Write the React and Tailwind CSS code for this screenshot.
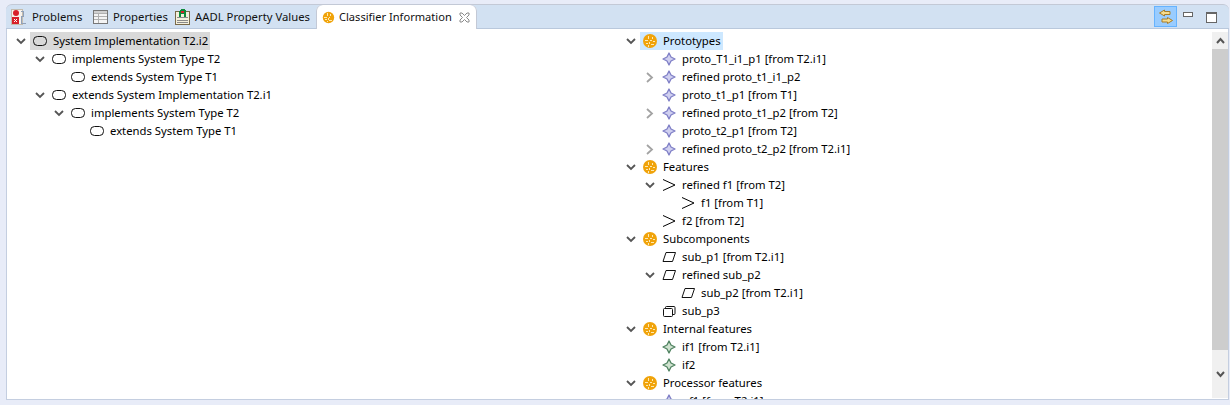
import React from "react";

const font = { fontFamily: "'Noto Sans', sans-serif" };

const depthPad = ["pl-0", "pl-[19px]", "pl-[38px]", "pl-[57px]"];

const SystemIcon = () => (
  <svg width="16" height="16" viewBox="0 0 16 16" fill="none">
    <rect x="1.5" y="3.5" width="13" height="9" rx="4" stroke="#111" />
  </svg>
);

const GoldIcon = ({ size = 16 }) => (
  <svg width={size} height={size} viewBox="0 0 16 16" shapeRendering="crispEdges" className="shrink-0">
    <circle cx="8" cy="8" r="7" fill="#f0a30a" shapeRendering="auto" />
    <path d="M6 3h1v3H6zM10 4h1v2h-1zM3 7h3v1H3zM8 7h2v1H8zM11 8h2v1h-2zM7 9h1v2H7zM4 10h2v1H4zM9 11h3v1H9zM6 12h1v2H6z" fill="#ffe9b0" />
  </svg>
);

const StarIcon = ({ fill, stroke }) => (
  <svg width="16" height="16" viewBox="0 0 16 16">
    <path d="M8 2 L10 6 L14 8 L10 10 L8 14 L6 10 L2 8 L6 6 Z" fill={fill} stroke={stroke} strokeWidth="1.3" strokeLinejoin="round" />
  </svg>
);

const FeatureIcon = () => (
  <svg width="16" height="16" viewBox="0 0 16 16" fill="none">
    <path d="M2 2.5 L14 8 L2 13.5" stroke="#000" strokeWidth="1" />
  </svg>
);

const SubIcon = () => (
  <svg width="16" height="16" viewBox="0 0 16 16" fill="none">
    <path d="M5 3.5 H14.5 L11.5 12.5 H2 Z" stroke="#111" strokeLinejoin="round" />
  </svg>
);

const BoxIcon = () => (
  <svg width="16" height="16" viewBox="0 0 16 16" fill="none">
    <rect x="2.5" y="5.5" width="9" height="8" rx="1" stroke="#111" />
    <path d="M4.5 5.5 V4.5 Q4.5 3.5 5.5 3.5 H13 Q14 3.5 14 4.5 V10.5 Q14 11.5 13 11.5 H11.5" stroke="#111" />
  </svg>
);

const icons = {
  system: <SystemIcon />,
  gold: <GoldIcon />,
  proto: <StarIcon fill="#d0d0f0" stroke="#7f7fc6" />,
  feature: <FeatureIcon />,
  sub: <SubIcon />,
  box: <BoxIcon />,
  green: <StarIcon fill="#cfe2cf" stroke="#4f8260" />,
};

const Chevron = ({ state }) => {
  if (state === "open") {
    return (
      <svg width="10" height="7" viewBox="0 0 10 7" fill="none">
        <path d="M1 1 L5 5 L9 1" stroke="#555" strokeWidth="1.8" />
      </svg>
    );
  }
  if (state === "closed") {
    return (
      <svg width="8" height="11" viewBox="0 0 8 11" fill="none">
        <path d="M1 1 L6 5.5 L1 10" stroke="#a3a3a3" strokeWidth="1.8" />
      </svg>
    );
  }
  return null;
};

const TreeRow = ({ depth, state, icon, label, selected }) => (
  <div className={`flex h-[18px] items-center ${depthPad[depth]}`}>
    <span className="flex h-[18px] w-[19px] shrink-0 items-center justify-center">
      <Chevron state={state} />
    </span>
    <span className={`flex h-[18px] items-center gap-[5px] pl-[2px] pr-[2px] ${selected || ""}`}>
      {icons[icon]}
      <span className="whitespace-nowrap text-[11.3px] leading-[18px] text-black">{label}</span>
    </span>
  </div>
);

const leftRows = [
  { depth: 0, state: "open", icon: "system", label: "System Implementation T2.i2", selected: "bg-[#d9d9d9]" },
  { depth: 1, state: "open", icon: "system", label: "implements System Type T2" },
  { depth: 2, icon: "system", label: "extends System Type T1" },
  { depth: 1, state: "open", icon: "system", label: "extends System Implementation T2.i1" },
  { depth: 2, state: "open", icon: "system", label: "implements System Type T2" },
  { depth: 3, icon: "system", label: "extends System Type T1" },
];

const rightRows = [
  { depth: 0, state: "open", icon: "gold", label: "Prototypes", selected: "bg-[#cde8ff]" },
  { depth: 1, icon: "proto", label: "proto_T1_i1_p1 [from T2.i1]" },
  { depth: 1, state: "closed", icon: "proto", label: "refined proto_t1_i1_p2" },
  { depth: 1, icon: "proto", label: "proto_t1_p1 [from T1]" },
  { depth: 1, state: "closed", icon: "proto", label: "refined proto_t1_p2 [from T2]" },
  { depth: 1, icon: "proto", label: "proto_t2_p1 [from T2]" },
  { depth: 1, state: "closed", icon: "proto", label: "refined proto_t2_p2 [from T2.i1]" },
  { depth: 0, state: "open", icon: "gold", label: "Features" },
  { depth: 1, state: "open", icon: "feature", label: "refined f1 [from T2]" },
  { depth: 2, icon: "feature", label: "f1 [from T1]" },
  { depth: 1, icon: "feature", label: "f2 [from T2]" },
  { depth: 0, state: "open", icon: "gold", label: "Subcomponents" },
  { depth: 1, icon: "sub", label: "sub_p1 [from T2.i1]" },
  { depth: 1, state: "open", icon: "sub", label: "refined sub_p2" },
  { depth: 2, icon: "sub", label: "sub_p2 [from T2.i1]" },
  { depth: 1, icon: "box", label: "sub_p3" },
  { depth: 0, state: "open", icon: "gold", label: "Internal features" },
  { depth: 1, icon: "green", label: "if1 [from T2.i1]" },
  { depth: 1, icon: "green", label: "if2" },
  { depth: 0, state: "open", icon: "gold", label: "Processor features" },
  { depth: 1, icon: "proto", label: "pf1 [from T2.i1]" },
];

const ProblemsIcon = () => (
  <svg width="15" height="16" viewBox="0 0 15 16" shapeRendering="crispEdges" className="shrink-0">
    <rect x="0.5" y="0.5" width="11" height="15" fill="#f6f2ec" stroke="#c4bcae" />
    <circle cx="5" cy="4" r="3" fill="#d8202a" shapeRendering="auto" />
    <rect x="1" y="8" width="7" height="7" fill="#d8202a" />
    <path d="M3 10h1v1H3zM5 10h1v1H5zM4 11h1v1H4zM3 12h1v1H3zM5 12h1v1H5z" fill="#fff" />
    <path d="M9.5 2.5h3v5h-2v7h4" fill="none" stroke="#8fa0b8" />
  </svg>
);

const PropertiesIcon = () => (
  <svg width="15" height="14" viewBox="0 0 15 14" shapeRendering="crispEdges" className="shrink-0">
    <rect x="0.5" y="0.5" width="14" height="13" fill="#f4f4f4" stroke="#777" />
    <path d="M1 3.5h13M1 6.5h13M1 9.5h13M5.5 3v10" stroke="#b0b0b0" fill="none" />
    <rect x="1" y="1" width="13" height="2" fill="#cfcfcf" />
  </svg>
);

const AadlIcon = () => (
  <svg width="15" height="16" viewBox="0 0 15 16" shapeRendering="crispEdges" className="shrink-0">
    <rect x="0.5" y="2.5" width="14" height="13" fill="#f4f0dc" stroke="#7a6a4a" />
    <path d="M2 8.5h11M2 11.5h11M2 13.5h11" stroke="#8a8a8a" fill="none" />
    <path d="M4 8V2l2-2h3l2 2v6H9V5H6v3z" fill="#0f8a3a" />
    <rect x="6" y="2" width="3" height="2" fill="#d8202a" />
  </svg>
);

const Tab = ({ icon, label, className }) => (
  <div className={`flex h-[24px] shrink-0 items-center ${className}`}>
    {icon}
    <span className="whitespace-nowrap pt-px text-[11.3px] text-[#111]">{label}</span>
  </div>
);

const ToggleIcon = () => (
  <svg width="16" height="16" viewBox="0 0 16 16">
    <path d="M6.5 1 L1.5 4 L6.5 7 V5.5 H12 V2.5 H6.5 Z" fill="#f7dc8e" stroke="#a87c26" />
    <path d="M9.5 8.5 L14.5 11.5 L9.5 14.5 V13 H4 V10 H9.5 Z" fill="#f7dc8e" stroke="#a87c26" />
  </svg>
);

const App = () => (
  <div className="flex h-[405px] w-[1230px] flex-col overflow-hidden bg-[#e8ecf8] pl-[6px] pr-px pt-[4px] pb-[5px]" style={font}>
    <div className="flex h-[25px] shrink-0 rounded-t-[6px] border-t border-[#c3c9d6] bg-[#d2e1f2] shadow-[inset_0_-1px_0_#b9c8dc]">
      <Tab className="ml-[5px] w-[82px] gap-[6px]" icon={<ProblemsIcon />} label="Problems" />
      <Tab className="w-[82px] gap-[5px]" icon={<PropertiesIcon />} label="Properties" />
      <Tab className="w-[141px] gap-[5px]" icon={<AadlIcon />} label="AADL Property Values" />
      <div className="flex h-[24px] w-[161px] shrink-0 items-center gap-[4px] rounded-t-[6px] bg-white pl-[6px] shadow-[inset_1px_0_0_#c3c9d6,inset_-1px_0_0_#c3c9d6]">
        <GoldIcon size={13} />
        <span className="whitespace-nowrap pt-px text-[11.1px] text-[#111]">Classifier Information</span>
        <svg width="11" height="11" viewBox="0 0 11 11" fill="none" className="ml-[3px] shrink-0">
          <path d="M1 1h2l2.5 2.5L8 1h2v2L7.5 5.5 10 8v2H8L5.5 7.5 3 10H1V8l2.5-2.5L1 3z" stroke="#8a8a8a" />
        </svg>
      </div>
      <div className="ml-auto flex h-[24px] items-start">
        <div className="mt-px flex h-[21px] w-[23px] items-center justify-center border border-[#66b3ff] bg-[#99ccff]">
          <ToggleIcon />
        </div>
        <div className="ml-[6px] mt-[7px] h-[5px] w-[10px] border border-[#666] bg-white" />
        <div className="ml-[13px] mr-[12px] mt-[7px] h-[11px] w-[11px] border border-t-2 border-[#666] bg-white" />
      </div>
    </div>
    <div className="flex min-h-0 flex-1 overflow-hidden border-x border-b border-[#c4cee0] bg-white">
      <div className="w-[610px] shrink-0 pl-[4px] pt-[3px]">
        {leftRows.map((row, i) => (
          <TreeRow key={i} {...row} />
        ))}
      </div>
      <div className="min-w-0 flex-1 overflow-hidden pl-[4px] pt-[3px]">
        {rightRows.map((row, i) => (
          <TreeRow key={i} {...row} />
        ))}
      </div>
      <div className="mt-[3px] mb-px flex w-[16px] shrink-0 flex-col bg-[#f0f0f0]">
        <div className="flex h-[17px] items-center justify-center">
          <svg width="9" height="7" viewBox="0 0 9 7" fill="none">
            <path d="M1 6 L4.5 2 L8 6" stroke="#555" strokeWidth="2" />
          </svg>
        </div>
        <div className="h-[301px] bg-[#cdcdcd]" />
        <div className="flex flex-1 items-center justify-center">
          <svg width="9" height="7" viewBox="0 0 9 7" fill="none">
            <path d="M1 1 L4.5 5 L8 1" stroke="#555" strokeWidth="2" />
          </svg>
        </div>
      </div>
    </div>
  </div>
);

export default App;
